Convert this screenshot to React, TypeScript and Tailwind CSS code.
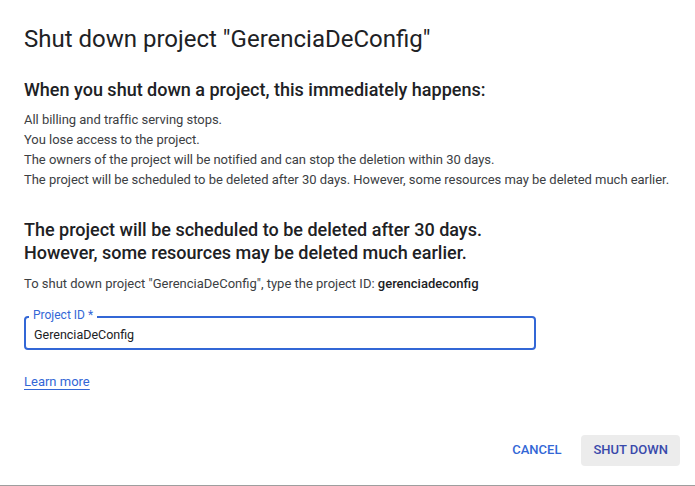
import React, { useState } from 'react';

const App: React.FC = () => {
  const [projectId, setProjectId] = useState('GerenciaDeConfig');

  return (
    <div className="w-[695px] h-[486px] bg-white font-['Roboto',sans-serif] text-[#202124] flex flex-col border-b border-[#9e9e9e] overflow-hidden">
      {/* Title */}
      <h1 className="px-6 pt-[23px] text-[24px] leading-8 font-normal text-[#202124]">
        Shut down project "GerenciaDeConfig"
      </h1>

      {/* What happens */}
      <h2 className="px-6 mt-[23px] text-[18px] leading-6 font-medium">
        When you shut down a project, this immediately happens:
      </h2>
      <ul className="px-6 mt-[8px] text-[13px] leading-5 text-[#3c4043] whitespace-nowrap tracking-[-0.03px]">
        <li>All billing and traffic serving stops.</li>
        <li>You lose access to the project.</li>
        <li>The owners of the project will be notified and can stop the deletion within 30 days.</li>
        <li>The project will be scheduled to be deleted after 30 days. However, some resources may be deleted much earlier.</li>
      </ul>

      <h2 className="px-6 mt-[28px] text-[18px] leading-[23px] font-medium">
        The project will be scheduled to be deleted after 30 days.
        <br />
        However, some resources may be deleted much earlier.
      </h2>
      <p className="px-6 mt-[10px] text-[13px] leading-5 text-[#3c4043]">
        To shut down project "GerenciaDeConfig", type the project ID:{' '}
        <span className="font-medium text-[#202124]">gerenciadeconfig</span>
      </p>

      {/* Project ID input */}
      <div className="px-6 mt-[22px]">
        <div className="relative w-[512px]">
          <input
            value={projectId}
            onChange={e => setProjectId(e.target.value)}
            className="w-full h-[34px] px-[8px] pt-[2px] border-2 border-[#3367d6] rounded-[4px] text-[12.5px] text-[#202124] outline-none"
          />
          <span className="absolute left-[5px] -top-[9px] px-[4px] bg-white text-[12px] leading-4 text-[#3367d6]">
            Project ID *
          </span>
        </div>
      </div>

      <div className="px-6 mt-[19px]">
        <a href="#" className="text-[13px] text-[#3367d6] underline underline-offset-[3px]">
          Learn more
        </a>
      </div>

      {/* Actions */}
      <div className="mt-auto mb-[19px] px-[15px] flex justify-end items-center gap-[6px]">
        <button type="button" className="h-[32px] px-[14px] text-[13px] font-medium text-[#3367d6] rounded-[4px]">
          CANCEL
        </button>
        <button type="button" className="h-[31px] px-[12px] text-[13px] font-medium text-[#3949ab] bg-[#ececec] rounded-[4px]">
          SHUT DOWN
        </button>
      </div>
    </div>
  );
};

export default App;
